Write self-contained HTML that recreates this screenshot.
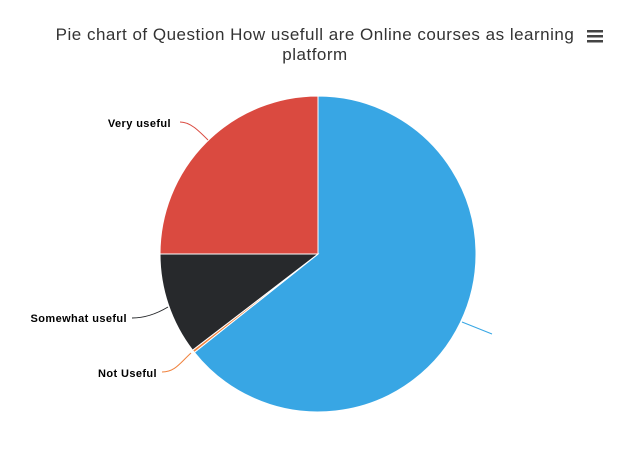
<!DOCTYPE html>
<html><head><style>
body{margin:0;background:#fff;width:629px;height:453px;overflow:hidden;font-family:"Liberation Sans",sans-serif}
</style></head><body>
<svg width="629" height="453" xmlns="http://www.w3.org/2000/svg">
<text x="315" y="40" text-anchor="middle" font-size="17" letter-spacing="0.5" fill="#333" font-family="Liberation Sans, sans-serif">Pie chart of Question How usefull are Online courses as learning</text>
<text x="315" y="60" text-anchor="middle" font-size="17" letter-spacing="0.5" fill="#333" font-family="Liberation Sans, sans-serif">platform</text>
<g fill="#444"><rect x="587" y="30" width="16" height="2.5"/><rect x="587" y="35" width="16" height="2.5"/><rect x="587" y="40" width="16" height="2.5"/></g>
<g stroke="#fff" stroke-width="1">
<path d="M318,254 L318,96 A158,158 0 1 1 194.4,352.4 Z" fill="#38a6e4"/>
<path d="M318,254 L194.4,352.4 A158,158 0 0 1 192.6,350.2 Z" fill="#f0823d"/>
<path d="M318,254 L192.6,350.2 A158,158 0 0 1 160,254 Z" fill="#27292c"/>
<path d="M318,254 L160,254 A158,158 0 0 1 318,96 Z" fill="#da4a40"/>
</g>
<g fill="none" stroke-width="1">
<path d="M462,322 L492,334" stroke="#38a6e4"/>
<path d="M208,140 C198,130 190,122 180,122" stroke="#da4a40"/>
<path d="M168,307 C158,313 145,318 132,318" stroke="#27292c"/>
<path d="M191,353 C180,363 175,372 162,372" stroke="#f0823d"/>
</g>
<g font-size="11" font-weight="bold" fill="#000" text-anchor="end" letter-spacing="0.4">
<text x="171" y="127">Very useful</text>
<text x="127" y="322">Somewhat useful</text>
<text x="157" y="377">Not Useful</text>
</g>
</svg>
</body></html>
